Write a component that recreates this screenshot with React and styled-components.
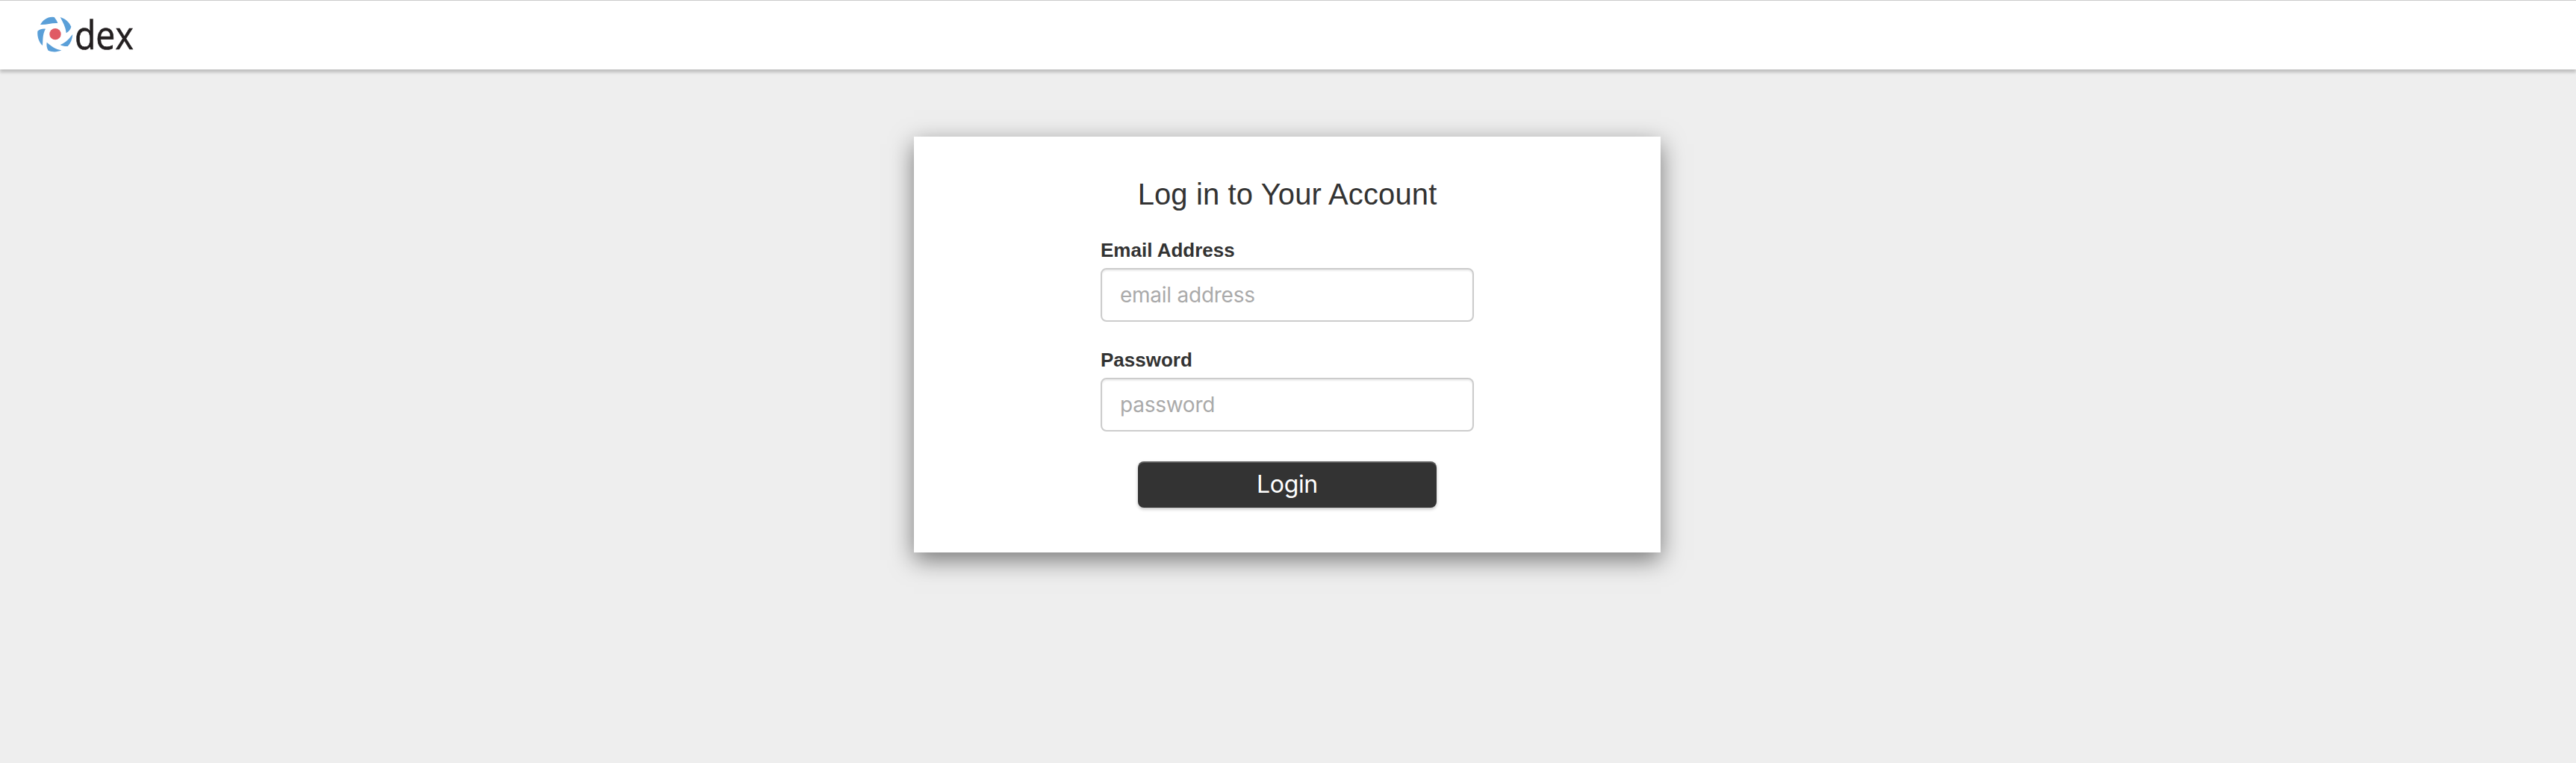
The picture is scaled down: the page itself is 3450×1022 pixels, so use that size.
import React from "react";
import styled, { createGlobalStyle } from "styled-components";

const GlobalStyle = createGlobalStyle`
  *, *::before, *::after { box-sizing: border-box; }
  body {
    margin: 0;
    background: #eee;
    color: #333;
    font-family: "Liberation Sans", Arial, sans-serif;
  }
`;

const Page = styled.div`
  display: flex;
  flex-direction: column;
  align-items: center;
  min-height: 100vh;
`;

const Navbar = styled.header`
  display: flex;
  align-items: flex-start;
  width: 100%;
  height: 93px;
  padding: 19px 0 0 48px;
  background: #fff;
  border-top: 1px solid #ccc;
  box-shadow: 0 4px 4px rgba(0, 0, 0, 0.2);
`;

const Logo = styled.svg`
  display: block;
  width: 134px;
  height: 52px;
  overflow: visible;
`;

const Wordmark = styled.text`
  font-family: "Open Sans", "Noto Sans", sans-serif;
  font-size: 160px;
  fill: #231f20;
  stroke: #231f20;
  stroke-width: 2px;
`;

const Panel = styled.main`
  display: flex;
  flex-direction: column;
  align-items: center;
  width: 1000px;
  height: 557px;
  margin: 90px 2px 0 0;
  padding-top: 54px;
  background: #fff;
  box-shadow: 0 10px 30px rgba(0, 0, 0, 0.5);
`;

const Heading = styled.h2`
  margin: 0;
  font-size: 40px;
  line-height: 46px;
  font-weight: 400;
  letter-spacing: 0.12px;
  white-space: nowrap;
`;

const Form = styled.form`
  display: flex;
  flex-direction: column;
  align-items: center;
  padding-top: 36px;
`;

const Field = styled.div`
  display: flex;
  flex-direction: column;
  width: 500px;
  height: 147px;
`;

const Label = styled.label`
  height: 40px;
  font-size: 26px;
  line-height: 32px;
  font-weight: 700;
`;

const Input = styled.input`
  width: 100%;
  height: 72px;
  padding: 0 24px;
  border: 2px solid #ccc;
  border-radius: 8px;
  outline: none;
  background: #fff;
  box-shadow: inset 0 2px 2px rgba(0, 0, 0, 0.075);
  color: #666;
  font-family: Inter, sans-serif;
  font-size: 28px;
  letter-spacing: -0.25px;

  &::placeholder {
    color: #aaa;
    opacity: 1;
  }
`;

const SubmitButton = styled.button`
  width: 400px;
  height: 62px;
  margin-top: 5px;
  padding: 0;
  border: 0;
  border-radius: 8px;
  background: #333;
  box-shadow: 0 2px 4px rgba(0, 0, 0, 0.25), inset 0 2px 0 rgba(255, 255, 255, 0.2);
  color: #fff;
  font-family: Inter, sans-serif;
  font-size: 32px;
  letter-spacing: -0.35px;
  line-height: 62px;
`;

function DexLogo() {
  return (
    <Logo viewBox="144 60 402 156" role="img" aria-label="dex">
      <g fill="#5a9fd8">
        <path d="M162 99C173 80 188 69 210 68L218 69C224 77 229 84 232 93C207 91 187 101 162 99Z" />
        <path d="M242 69C263 76 277 88 286 107C284 117 277 126 266 133C264 109 253 90 242 69Z" />
        <path d="M292 138C290 158 284 174 272 186C262 187 251 185 242 180C266 171 277 155 292 138Z" />
        <path d="M247 202C229 210 211 210 194 203C188 193 186 182 188 170C207 187 224 198 247 202Z" />
        <path d="M171 183C156 169 149 147 151 125C160 118 171 114 183 116C170 139 173 160 171 183Z" />
      </g>
      <circle cx="222" cy="137" r="23" fill="#e05a64" />
      <Wordmark x="300" y="197" textLength="236" lengthAdjust="spacingAndGlyphs">
        dex
      </Wordmark>
    </Logo>
  );
}

export default function App() {
  return (
    <>
      <GlobalStyle />
      <Page>
        <Navbar>
          <DexLogo />
        </Navbar>
        <Panel>
          <Heading>Log in to Your Account</Heading>
          <Form onSubmit={(event) => event.preventDefault()}>
            <Field>
              <Label htmlFor="login">Email Address</Label>
              <Input id="login" type="text" placeholder="email address" />
            </Field>
            <Field>
              <Label htmlFor="password">Password</Label>
              <Input id="password" type="password" placeholder="password" />
            </Field>
            <SubmitButton type="submit">Login</SubmitButton>
          </Form>
        </Panel>
      </Page>
    </>
  );
}
